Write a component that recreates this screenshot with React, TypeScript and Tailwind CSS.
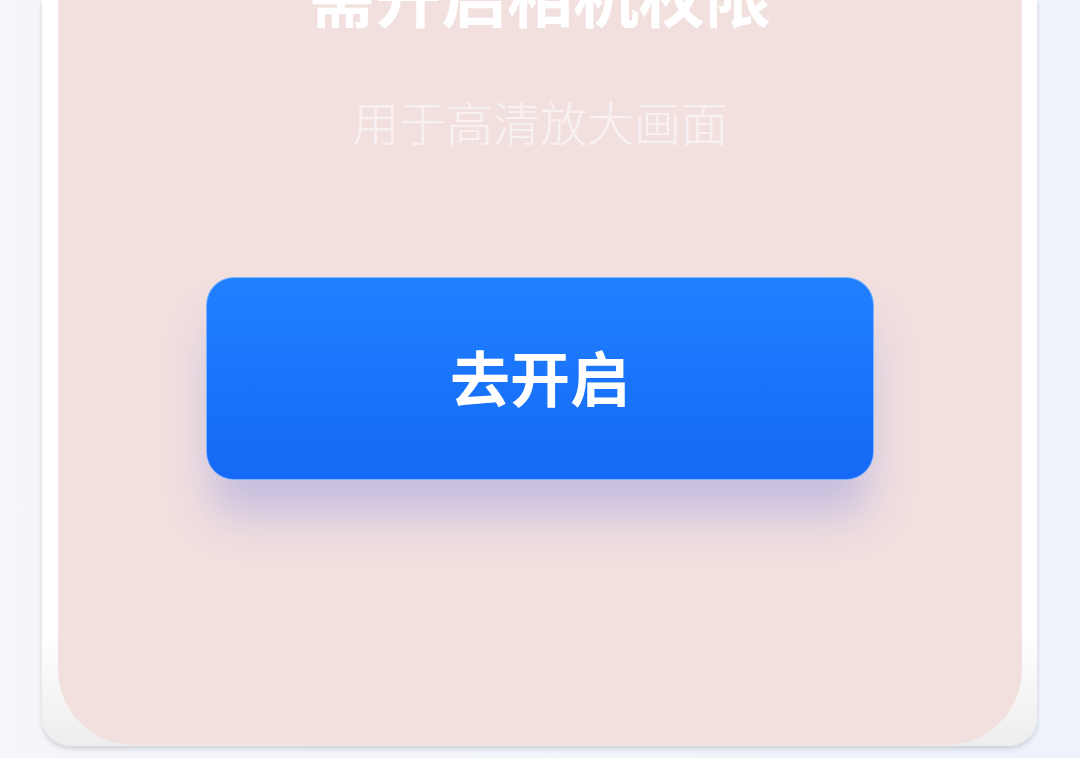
import React from 'react';

const cjk = { fontFamily: '"Noto Sans CJK SC", "Noto Sans", sans-serif' };

const PermissionCard: React.FC = () => {
  return (
    <div className="ml-[42px] w-[995px] h-[746px] rounded-b-[28px] bg-gradient-to-b from-white from-85% to-[#ededed] shadow-[0_3px_5px_rgba(0,0,0,0.14)] pl-[16px] pr-[15px] pb-[1px]">
      <div className="h-full rounded-b-[76px] bg-[#f2e0df] flex flex-col items-center" style={cjk}>
        {/* Title, cut off by the top of the screen */}
        <h1 className="-mt-[40px] text-[66px] leading-[66px] font-bold text-white">需开启相机权限</h1>
        <p className="mt-[71px] text-[47px] leading-[47px] font-light text-white/55">用于高清放大画面</p>

        <button
          className="mt-[133px] w-[668px] h-[203px] pb-[5px] rounded-[28px] border border-[#7fb2ff] bg-gradient-to-b from-[#2080ff] to-[#1569f6] text-white text-[60px] font-bold leading-none shadow-[0_40px_45px_-5px_rgba(95,110,225,0.3)]"
          style={cjk}
        >
          去开启
        </button>
      </div>
    </div>
  );
};

export default function App() {
  return (
    <div className="w-full h-[758px] overflow-hidden bg-gradient-to-r from-[#f5f6fa] to-[#eef2fb]">
      <PermissionCard />
    </div>
  );
}
